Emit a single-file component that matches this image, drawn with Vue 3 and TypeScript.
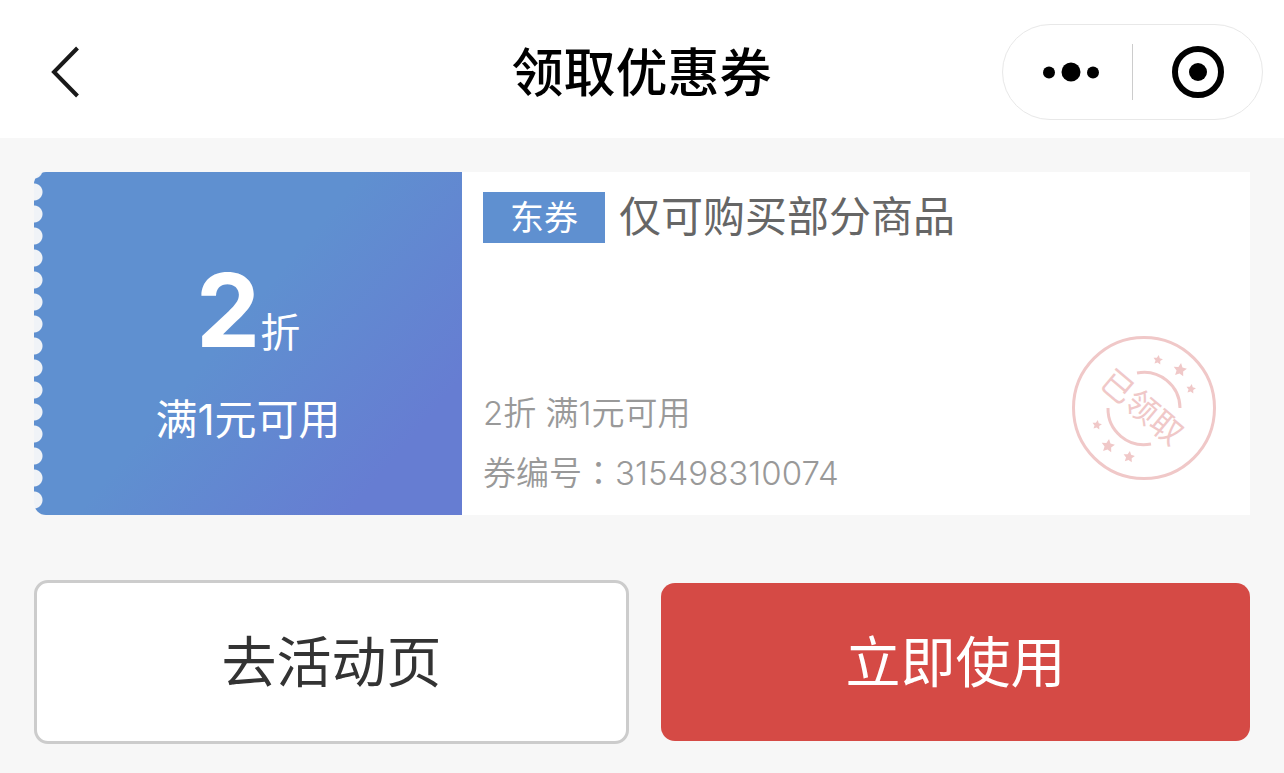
<script setup lang="ts">
interface Star {
  x: number
  y: number
  r: number
}

const coupon = {
  discount: '2',
  unit: '折',
  tag: '东券',
  scope: '仅可购买部分商品',
  code: '315498310074',
}

const stars: Star[] = [
  { x: 86, y: 24, r: 5 },
  { x: 108, y: 34, r: 7 },
  { x: 119, y: 53, r: 5 },
  { x: 25, y: 89, r: 5 },
  { x: 36, y: 110, r: 7 },
  { x: 57, y: 121, r: 6 },
]

function starPoints(star: Star): string {
  return Array.from({ length: 10 }, (_, i) => {
    const radius = i % 2 === 0 ? star.r : star.r * 0.5
    const angle = (Math.PI / 5) * i - Math.PI / 2 + 0.15
    return `${(star.x + radius * Math.cos(angle)).toFixed(2)},${(star.y + radius * Math.sin(angle)).toFixed(2)}`
  }).join(' ')
}
</script>

<template>
  <div class="page">
    <header class="nav">
      <button class="back" type="button" aria-label="返回">
        <svg width="32" height="56" viewBox="0 0 32 56" aria-hidden="true">
          <path d="M29.500 4 L6 28 L29.500 52" />
        </svg>
      </button>
      <h1 class="title">领取优惠券</h1>
      <div class="capsule">
        <button class="capsule-btn" type="button" aria-label="更多">
          <svg width="72" height="24" viewBox="0 0 72 24" aria-hidden="true">
            <circle cx="17" cy="12.500" r="6" />
            <circle cx="39" cy="12" r="9.500" />
            <circle cx="61" cy="12.500" r="6" />
          </svg>
        </button>
        <span class="divider"></span>
        <button class="capsule-btn" type="button" aria-label="关闭">
          <svg width="52" height="52" viewBox="0 0 52 52" aria-hidden="true">
            <circle cx="26" cy="26" r="23" fill="none" stroke="#000" stroke-width="6" />
            <circle cx="26" cy="26" r="9" />
          </svg>
        </button>
      </div>
    </header>

    <main class="content">
      <section class="coupon">
        <div class="value">
          <p class="amount"><strong>{{ coupon.discount }}</strong><span>{{ coupon.unit }}</span></p>
          <p class="condition">满1元可用</p>
        </div>
        <div class="info">
          <div class="heading">
            <span class="tag">{{ coupon.tag }}</span>
            <h2 class="scope">{{ coupon.scope }}</h2>
          </div>
          <div class="details">
            <p>2折 满1元可用</p>
            <p>券编号<span class="colon">：</span>{{ coupon.code }}</p>
          </div>
          <svg class="stamp" width="144" height="144" viewBox="0 0 144 144" role="img" aria-label="已领取">
            <circle cx="72" cy="72" r="70.500" class="line" />
            <path d="M65 37 A36 36 0 0 1 108 72" class="line" />
            <path d="M36 72 A36 36 0 0 0 79 108" class="line" />
            <polygon v-for="star in stars" :key="star.x" :points="starPoints(star)" />
            <text x="70" y="84" text-anchor="middle" transform="rotate(40 72 72)">已领取</text>
          </svg>
        </div>
      </section>

      <div class="actions">
        <button class="action" type="button">去活动页</button>
        <button class="action primary" type="button">立即使用</button>
      </div>
    </main>
  </div>
</template>

<style>
body {
  margin: 0;
  background: #f7f7f7;
}
</style>

<style scoped>
.page {
  min-height: 100vh;
  background: #f7f7f7;
  font-family: Inter, "Noto Sans CJK SC", sans-serif;
  font-weight: 400;
}

h1,
h2,
p {
  margin: 0;
}

button {
  border: 0;
  padding: 0;
  background: none;
  font: inherit;
  cursor: pointer;
}

svg {
  display: block;
}

.nav {
  display: grid;
  grid-template-columns: 1fr auto 1fr;
  align-items: center;
  height: 138px;
  padding: 6px 21px 0 48px;
  box-sizing: border-box;
  background: #fff;
}

.back {
  justify-self: start;
}

.back path {
  fill: none;
  stroke: #191919;
  stroke-width: 4;
}

.title {
  margin: 4px 0 0 -28px;
  font-size: 52px;
  line-height: 76px;
  font-weight: 500;
  color: #000;
}

.capsule {
  justify-self: end;
  display: flex;
  align-items: center;
  width: 261px;
  height: 96px;
  border: 1px solid #e8e8e8;
  border-radius: 48px;
  box-sizing: border-box;
}

.capsule-btn {
  flex: 1;
  display: flex;
  justify-content: center;
}

.divider {
  width: 1px;
  height: 56px;
  background: #ccc;
}

.content {
  padding: 34px;
}

.coupon {
  display: flex;
  min-height: 343px;
  background: #fff;
  border-radius: 12px 0 0 12px;
}

.value {
  display: flex;
  flex-direction: column;
  align-items: center;
  width: 428px;
  padding-top: 77px;
  box-sizing: border-box;
  color: #fff;
  border-radius: 12px 0 0 12px;
  background:
    radial-gradient(circle at 0 11px, #f0f3f7 8px, transparent 9px) 0 9px / 12px 22px repeat-y,
    linear-gradient(130deg, #5f90d0 46%, #667dd2 84%);
}

.amount {
  display: flex;
  align-items: baseline;
  line-height: 122px;
}

.amount strong {
  font-size: 102px;
  font-weight: 700;
}

.amount span {
  font-size: 40px;
}

.condition {
  margin-top: -4px;
  font-size: 42px;
  line-height: 60px;
}

.info {
  position: relative;
  flex: 1;
  display: flex;
  flex-direction: column;
  justify-content: space-between;
  padding: 15px 34px 12px 21px;
}

.heading {
  display: flex;
  align-items: center;
  gap: 14px;
}

.tag {
  padding: 0 27px;
  background: #5f90d0;
  color: #fff;
  font-size: 34px;
  line-height: 51px;
}

.scope {
  font-size: 42px;
  line-height: 60px;
  font-weight: 400;
  color: #666;
}

.details {
  font-size: 33px;
  font-weight: 350;
  line-height: 60px;
  color: #999;
}

.colon {
  font-family: "Noto Sans CJK TC", sans-serif;
  line-height: 1;
}

.stamp {
  position: absolute;
  right: 34px;
  bottom: 35px;
  fill: #f0c8c8;
}

.stamp .line {
  fill: none;
  stroke: #f0c8c8;
  stroke-width: 3;
}

.stamp text {
  font-size: 32px;
}

.actions {
  display: flex;
  align-items: center;
  gap: 32px;
  margin-top: 65px;
}

.action {
  flex: 1;
  box-sizing: content-box;
  border: 3px solid #ccc;
  border-radius: 14px;
  background: #fff;
  color: #333;
  font-size: 55px;
  line-height: 158px;
}

.primary {
  border: 0;
  background: #d54a45;
  color: #fff;
}
</style>
